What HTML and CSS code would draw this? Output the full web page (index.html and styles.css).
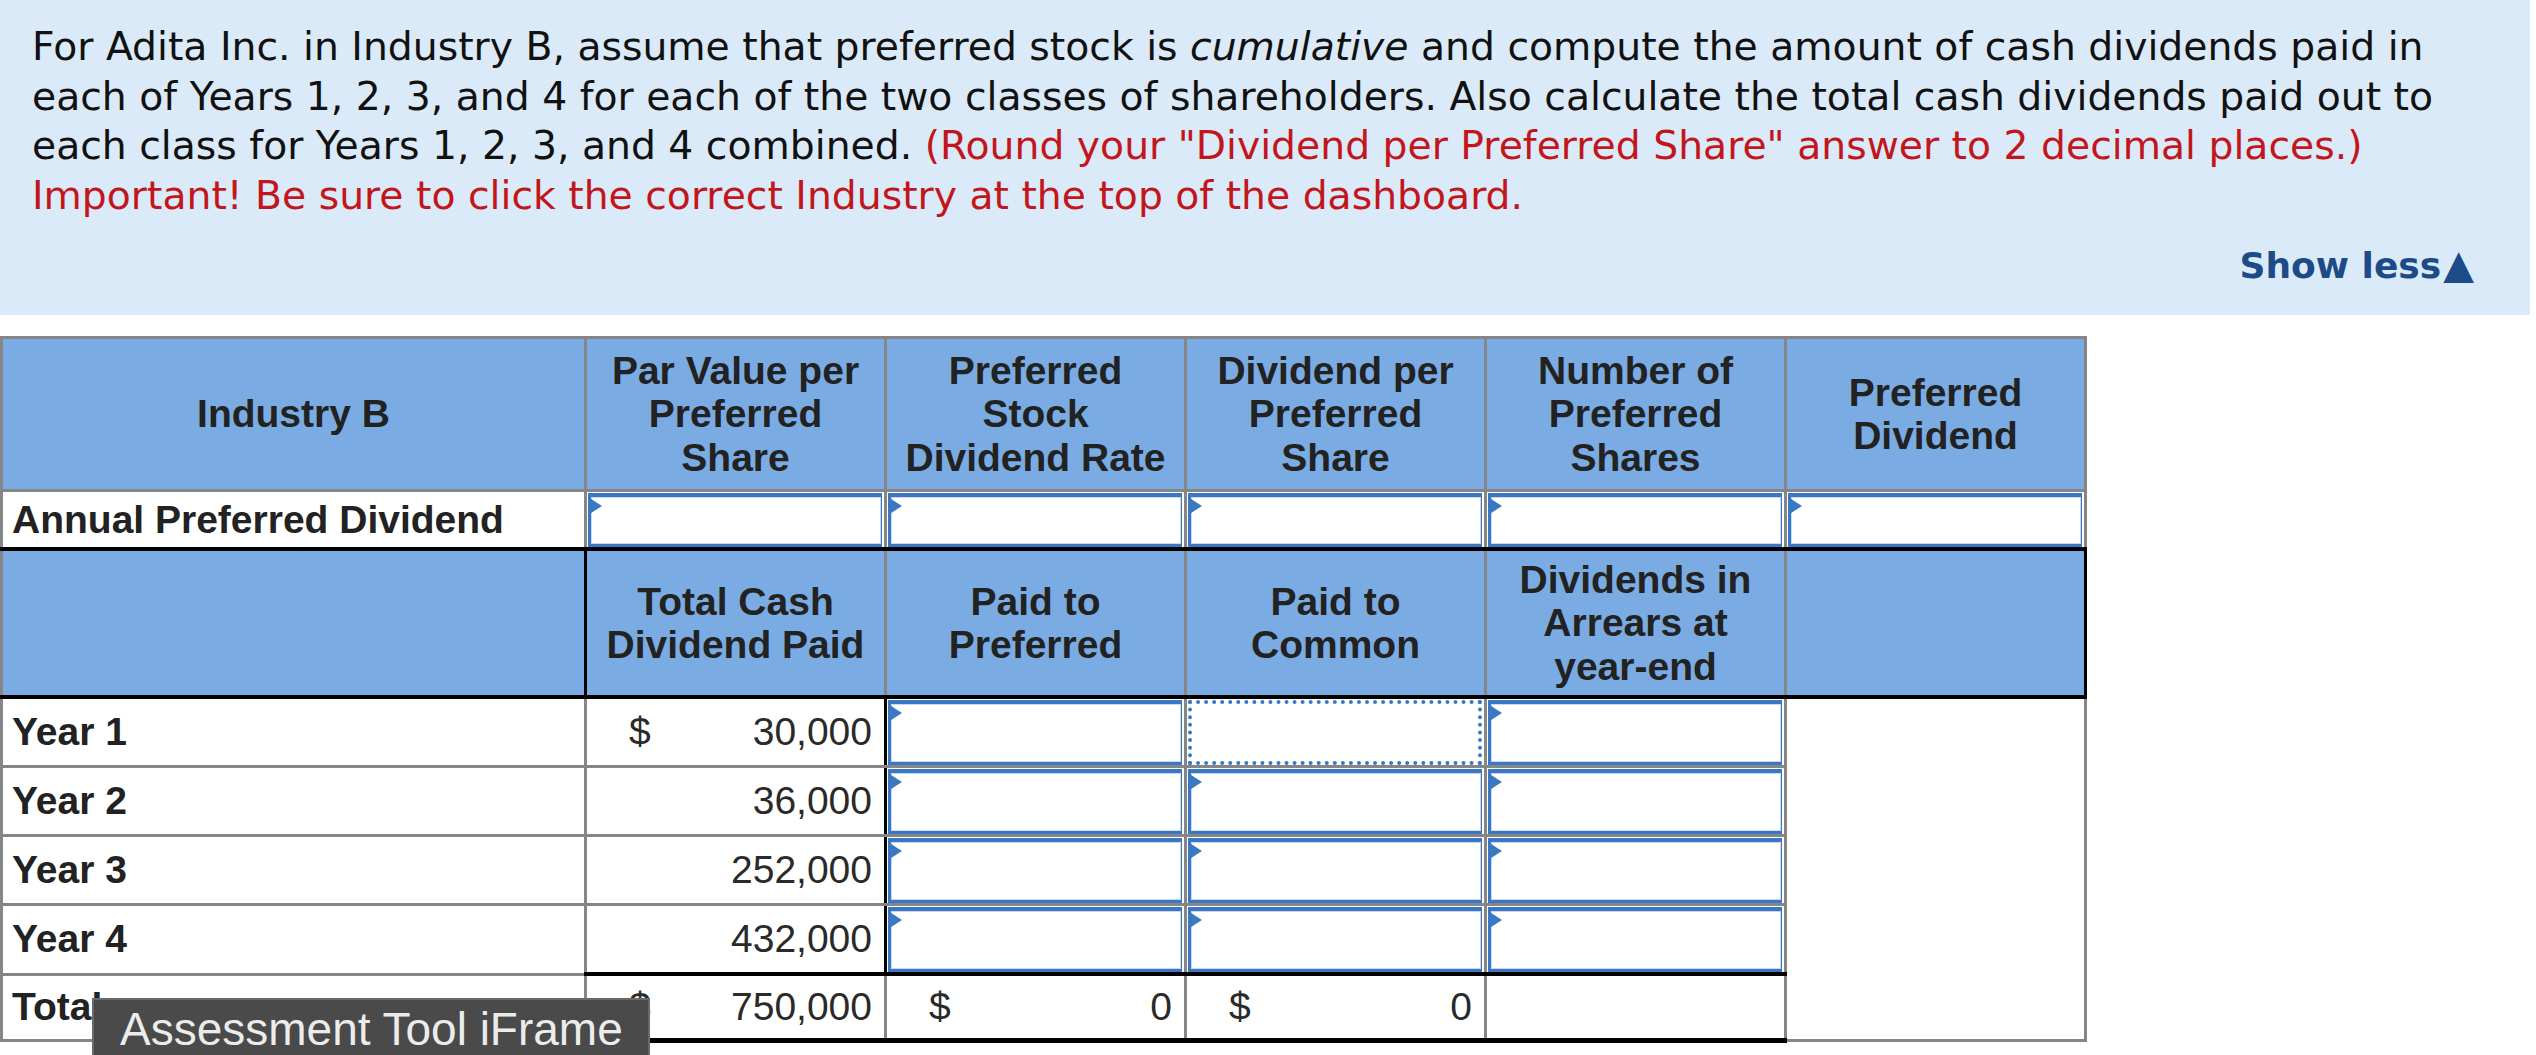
FILE: index.html
```html
<!DOCTYPE html>
<html>
<head>
<meta charset="utf-8">
<title>Assessment</title>
<link rel="stylesheet" href="styles.css">
</head>
<body>
<div class="prompt">
  <p class="question">For Adita Inc. in Industry B, assume that preferred stock is <i>cumulative</i> and compute the amount of cash dividends paid in<br>each of Years 1, 2, 3, and 4 for each of the two classes of shareholders. Also calculate the total cash dividends paid out to<br>each class for Years 1, 2, 3, and 4 combined. <span class="note">(Round your "Dividend per Preferred Share" answer to 2 decimal places.)<br>Important! Be sure to click the correct Industry at the top of the dashboard.</span></p>
  <div class="toggle-row"><span class="toggle">Show less<span class="arrow">&#9650;</span></span></div>
</div>

<table class="grid">
  <colgroup>
    <col class="c-label"><col class="c-val"><col class="c-val"><col class="c-val"><col class="c-val"><col class="c-val">
  </colgroup>
  <tr class="head1">
    <th>Industry B</th>
    <th>Par Value per<br>Preferred<br>Share</th>
    <th>Preferred<br>Stock<br>Dividend Rate</th>
    <th>Dividend per<br>Preferred<br>Share</th>
    <th>Number of<br>Preferred<br>Shares</th>
    <th>Preferred<br>Dividend</th>
  </tr>
  <tr class="annual">
    <td class="label">Annual Preferred Dividend</td>
    <td class="in"><div class="field"></div></td>
    <td class="in"><div class="field"></div></td>
    <td class="in"><div class="field"></div></td>
    <td class="in"><div class="field"></div></td>
    <td class="in"><div class="field"></div></td>
  </tr>
  <tr class="head2">
    <th class="sec-first"></th>
    <th>Total Cash<br>Dividend Paid</th>
    <th>Paid to<br>Preferred</th>
    <th>Paid to<br>Common</th>
    <th>Dividends in<br>Arrears at<br>year-end</th>
    <th class="sec-last"></th>
  </tr>
  <tr class="year">
    <td class="label">Year 1</td>
    <td class="amt"><div class="money"><span>$</span><span>30,000</span></div></td>
    <td class="in"><div class="field"></div></td>
    <td class="in"><div class="field focus"></div></td>
    <td class="in"><div class="field"></div></td>
    <td class="blank"></td>
  </tr>
  <tr class="year">
    <td class="label">Year 2</td>
    <td class="amt"><div class="money"><span></span><span>36,000</span></div></td>
    <td class="in"><div class="field"></div></td>
    <td class="in"><div class="field"></div></td>
    <td class="in"><div class="field"></div></td>
    <td class="blank"></td>
  </tr>
  <tr class="year">
    <td class="label">Year 3</td>
    <td class="amt"><div class="money"><span></span><span>252,000</span></div></td>
    <td class="in"><div class="field"></div></td>
    <td class="in"><div class="field"></div></td>
    <td class="in"><div class="field"></div></td>
    <td class="blank"></td>
  </tr>
  <tr class="year">
    <td class="label">Year 4</td>
    <td class="amt"><div class="money"><span></span><span>432,000</span></div></td>
    <td class="in"><div class="field"></div></td>
    <td class="in"><div class="field"></div></td>
    <td class="in"><div class="field"></div></td>
    <td class="blank"></td>
  </tr>
  <tr class="total">
    <td class="label">Total</td>
    <td class="tot"><div class="money"><span>$</span><span>750,000</span></div></td>
    <td class="tot"><div class="money"><span>$</span><span>0</span></div></td>
    <td class="tot"><div class="money"><span>$</span><span>0</span></div></td>
    <td class="tot"></td>
    <td class="blank-end"></td>
  </tr>
</table>

<div class="tooltip">Assessment Tool iFrame</div>
</body>
</html>
```

FILE: styles.css
```css
* { box-sizing: border-box; }

html, body {
  margin: 0;
  padding: 0;
  background: #ffffff;
}

body {
  width: 2536px;
  height: 1055px;
  overflow: hidden;
  position: relative;
}

.prompt {
  background: #dbeaf8;
  height: 315px;
  margin-right: 6px;
  padding: 22px 56px 0 32px;
}

.question {
  margin: 0;
  font-family: "DejaVu Sans", Verdana, sans-serif;
  font-size: 39.3px;
  line-height: 49.5px;
  color: #111111;
}

.note { color: #c3161c; }

.toggle-row {
  margin-top: 20px;
  text-align: right;
  font-family: "DejaVu Sans", Verdana, sans-serif;
  font-weight: bold;
  font-size: 36px;
  line-height: 49px;
  color: #1c4b88;
}

.arrow { font-size: 40px; margin-left: 2px; }

.grid {
  margin-top: 21px;
  border-collapse: collapse;
  table-layout: fixed;
  width: 2084px;
  font-family: "Liberation Sans", Arial, Helvetica, sans-serif;
  font-size: 39px;
  color: #222222;
  border: 3px solid #868686;
}

.c-label { width: 584px; }
.c-val { width: 300px; }

.grid th, .grid td {
  border: 3px solid #868686;
  padding: 0;
}

.grid th {
  background: #7aace3;
  font-weight: bold;
  line-height: 43.5px;
  text-align: center;
  vertical-align: middle;
}

.head1 th { height: 153px; }
.annual td { height: 57px; border-bottom: 4px solid #000; }
.head2 th { height: 148px; border-bottom: 4px solid #000; }
.head2 .sec-first { border-right: 3px solid #000; }
.head2 .sec-last { border-right: 3px solid #000; }
.year td { height: 69px; }
.total td { height: 66px; }

.label {
  font-weight: bold;
  text-align: left;
  padding-left: 9px !important;
}

.in { vertical-align: top; }

.field {
  position: relative;
  margin: 1px 2px 0 1px;
  background: #ffffff;
  border-style: solid;
  border-color: #3b78c3;
  border-width: 4px 1px 3px 3px;
  box-shadow: inset 0 0 0 1px #c6d9f0;
}

.annual .field { height: 54px; }
.year .field { height: 65px; }

.field::before {
  content: "";
  position: absolute;
  left: -3px;
  top: 0;
  width: 14px;
  height: 18px;
  background: #3b78c3;
  clip-path: polygon(0 0, 100% 50%, 0 100%);
}

.field.focus {
  border: 4px dotted #3b78c3;
  box-shadow: none;
}

.field.focus::before { display: none; }

.amt { border-right: 3px solid #000 !important; }

.money {
  display: flex;
  justify-content: space-between;
  padding: 0 12px 0 42px;
  color: #2a2a2a;
}

.tot {
  border-top: 4px solid #000 !important;
  border-bottom: 5px solid #000 !important;
}

.blank {
  border-top: none !important;
  border-bottom: none !important;
}

.blank-end { border-top: none !important; }

.tooltip {
  position: absolute;
  left: 92px;
  top: 998px;
  width: 558px;
  height: 70px;
  padding: 4px 0 0 26px;
  background: #4a4a4a;
  border: 2px solid #6a6a6a;
  color: #ececec;
  font-family: "Liberation Sans", Arial, Helvetica, sans-serif;
  font-size: 46px;
  line-height: 50px;
  white-space: nowrap;
}
```
